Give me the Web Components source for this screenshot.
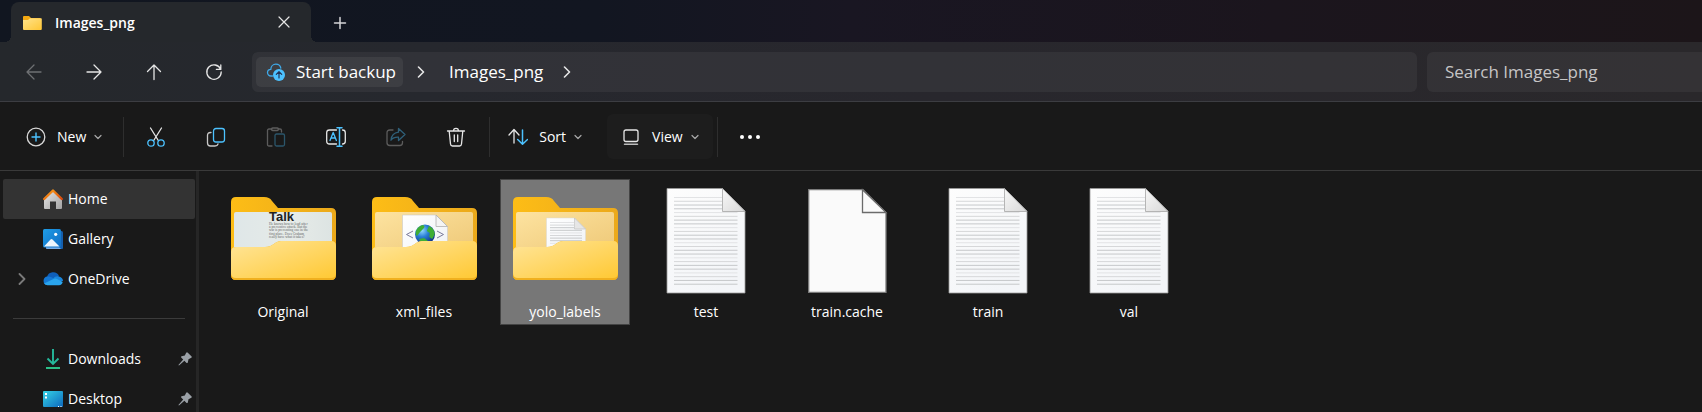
<!DOCTYPE html>
<html lang="en">
<head>
<meta charset="utf-8">
<title>Images_png</title>
<style>
  html, body { margin: 0; height: 100%; background: #191919; }
  body { font-family: "Open Sans", "Noto Sans", sans-serif; font-size: 14px; line-height: 20px; color: #fff; overflow: hidden; }
</style>
</head>
<body>
<file-explorer></file-explorer>
<script>
const line = (box, body, w = 20, h = 20) =>
  `<svg width="${w}" height="${h}" viewBox="${box}" fill="none" stroke="#e6e6e6" stroke-width="1.3" stroke-linecap="round" stroke-linejoin="round">${body}</svg>`;

const folderBack = `
  <defs>
    <linearGradient id="front" x1="0" y1="0" x2="1" y2="1"><stop offset="0" stop-color="#ffe59a"/><stop offset="1" stop-color="#ffc934"/></linearGradient>
    <linearGradient id="back" x1="0" y1="0" x2="1" y2="0"><stop offset="0" stop-color="#fdbd16"/><stop offset="1" stop-color="#eba91b"/></linearGradient>
    <linearGradient id="inner" x1="0" y1="0" x2="1" y2="1"><stop offset="0" stop-color="#fde3a0"/><stop offset="1" stop-color="#eec877"/></linearGradient>
    <linearGradient id="paper" x1="0" y1="0" x2="1" y2="1"><stop offset="0" stop-color="#ffffff"/><stop offset="1" stop-color="#eef1f5"/></linearGradient>
  </defs>
  <path d="M0 14q0-5 5-5h28c4 0 6 1 8 4l6 7h53q5 0 5 5v62q0 5-5 5H5q-5 0-5-5z" fill="url(#back)"/>`;
const folderFront = `
  <path d="M0 64q0-5 5-5h29c4 0 6-1 8-2.500l3-2q2-1.500 5-1.500h50q5 0 5 5v29q0 5-5 5H5q-5 0-5-5z" fill="#f0b01f"/>
  <path d="M0 64q0-5 5-5h29c4 0 6-1 8-2.500l3-2q2-1.500 5-1.500h50q5 0 5 5v27q0 5-5 5H5q-5 0-5-5z" fill="url(#front)"/>`;
const big = (body, x = 0) => `<svg width="106" height="106" viewBox="${x} 0 106 106">${body}</svg>`;
const folder = content => big(folderBack + content + folderFront, -1);

/* Ruled lines of a page; the lines beside the folded corner are shorter. */
const rules = (x, y, w, n, pitch, foldBottom, foldLeft) => Array.from({ length: n }, (_, i) => {
  const ly = y + i * pitch;
  return `<path d="M${x} ${ly}H${ly < foldBottom ? foldLeft : x + w}" stroke="${i % 4 == 0 ? '#e2e3e5' : i % 4 == 1 ? '#d6d7d9' : '#c6c8ca'}" stroke-width="1"/>`;
}).join('');

const textDoc = big(`
  <defs>
    <linearGradient id="page" x1="0" y1="0" x2="0.600" y2="1"><stop offset="0" stop-color="#fdfdfd"/><stop offset="1" stop-color="#f3f5f8"/></linearGradient>
    <linearGradient id="fold" x1="0" y1="0" x2="1" y2="1"><stop offset="0" stop-color="#f8f8f8"/><stop offset="1" stop-color="#d8d8d8"/></linearGradient>
  </defs>
  <path d="M14 .5h55.500l22.500 22.500v82H14z" fill="url(#page)" stroke="#9a9a9a" stroke-width=".8"/>
  ${rules(21, 9.5, 63.5, 24, 3.77, 24, 69)}
  <path d="M69.500 .5v23H92z" fill="url(#fold)" stroke="#a5a5a5" stroke-width=".8"/>`);

const copyLines = ['He knows how to lead after', 'a preventive attack. But the', 'war is preventing one in the', 'first place. Does Graham', 'really have what it takes?'];

const ICONS = {
  tabFolder: `<svg width="20" height="16" viewBox="0 0 20 16"><defs><linearGradient id="g" x1="0" y1="0" x2="1" y2="1"><stop offset="0" stop-color="#ffe38c"/><stop offset="1" stop-color="#ffc634"/></linearGradient></defs><path d="M1 2q0-1 1-1h5l2 2h9.500v10H1z" fill="#f4a912"/><path d="M1 5h5l2-1.700h11q.8 0 .8.8V14q0 1-1 1H2q-1 0-1-1z" fill="url(#g)"/></svg>`,
  close: line('0 0 12 12', '<path d="M1 1l10 10M11 1L1 11" stroke-width="1.200"/>', 12, 12),
  plus: line('0 0 14 14', '<path d="M7 1.500v11M1.500 7h11" stroke="#d5d5d8" stroke-width="1.500"/>', 14, 14),
  back: line('0 0 20 20', '<path d="M17 10H3M10 3l-7 7 7 7" stroke="#6e7073"/>'),
  forward: line('0 0 20 20', '<path d="M3 10h14M10 3l7 7-7 7"/>'),
  up: line('0 0 20 20', '<path d="M10 17.500V3M3.500 9.500L10 3l6.500 6.500"/>'),
  refresh: line('0 0 20 20', '<path d="M16.600 7.200A7.200 7.200 0 1 0 17.200 10M16.800 3v4.400h-4.400"/>'),
  cloud: `<svg width="20" height="20" viewBox="0 0 20 20" fill="none"><path d="M6.500 14H5C3 14 1.500 12.500 1.500 10.600 1.500 8.700 3 7.300 4.800 7.300 5 4.500 7 2.200 9.800 2.200c2.600 0 4.600 1.700 5 4" stroke="#3fa9e8" stroke-width="1.300" stroke-linecap="round"/><circle cx="13" cy="13" r="6" fill="#4cc2ff"/><path d="M13 16v-6M10.300 12.400L13 9.700l2.700 2.700" stroke="#235" stroke-width="1.200" stroke-linecap="round" stroke-linejoin="round"/></svg>`,
  chevron: line('0 0 8 12', '<path d="M1.500 1l5 5-5 5" stroke-width="1.600"/>', 8, 12),
  chevronDim: line('0 0 8 12', '<path d="M1.500 1l5 5-5 5" stroke="#7a7a7a" stroke-width="1.800"/>', 8, 12),
  down: line('0 0 8 8', '<path d="M1 2.500l3 3 3-3" stroke="#a8a8a8" stroke-width="1.200"/>', 8, 8),
  add: line('0 0 20 20', '<circle cx="10" cy="10" r="8.800" stroke="#d8d8d8"/><path d="M10 6v8M6 10h8" stroke="#4cc2ff" stroke-width="1.400"/>'),
  cut: line('0 0 20 20', '<path d="M4.500 1l7.800 12.500M15.500 1L7.700 13.500"/><g stroke="#4cc2ff"><circle cx="5" cy="16" r="3.200"/><circle cx="15" cy="16" r="3.200"/></g>'),
  copy: line('0 0 20 20', '<path d="M5 5.500H4.500Q1.500 5.500 1.500 8.500v7.500q0 3 3 3H9q2.500 0 3-2" stroke="#c8c8c8"/><rect x="7.500" y="1.500" width="11" height="13.500" rx="2.500" stroke="#4cc2ff"/>'),
  paste: line('0 0 20 20', '<g stroke="#5c5c5c"><path d="M6 19H3q-1.500 0-1.500-1.500v-14Q1.500 2 3 2h3M12 2h2q1.500 0 1.500 1.500V5"/><rect x="5.500" y="1" width="7" height="2.500" rx="1.200"/></g><rect x="9" y="7" width="9.500" height="12" rx="1.500" stroke="#2b566b"/>'),
  rename: line('0 0 20 20', '<path d="M10.500 17H3.500Q.7 17 .7 14.200V5.800Q.7 3 3.500 3h7M16.500 3q2.800 0 2.800 2.800v8.400q0 2.800-2.800 2.800"/><g stroke="#4cc2ff"><path d="M4 13.500l3.200-8 3.200 8M5 11h4.400"/><path d="M13.500 1v18M11 .8h5M11 19.200h5" stroke-width="1.500"/></g>'),
  share: line('0 0 20 20', '<path d="M7 3H3.800Q1 3 1 5.800v10Q1 18.500 3.800 18.500h10q2.700 0 2.700-2.700V14.500" stroke="#5c5c5c"/><path d="M12.500 1.500L19 7.500l-6.500 6v-3.300q-5-.3-7.500 3 .5-7 7.500-8z" stroke="#2f607a"/>'),
  trash: line('0 0 20 20', '<path d="M1.500 4h17M7.500 4q0-2.700 2.500-2.700T12.500 4M3.200 4l1.300 13q.2 2 2 2h7q1.800 0 2-2l1.300-13M8.300 8v6.500M11.700 8v6.500"/>'),
  sort: line('0 0 20 20', '<path d="M6 16V3M1 8l5-5.500L11 8"/><path d="M14.500 3v14M9.700 12.500l4.800 4.800 5-4.800" stroke="#4cc2ff" stroke-width="1.500"/>'),
  view: line('0 0 20 20', '<rect x="3" y="3" width="14" height="11.500" rx="2"/><path d="M3.500 17.300h13" stroke-width="1.500" stroke="#bdbdbd"/>'),
  more: `<svg width="20" height="20" viewBox="0 0 20 20" fill="#fff"><circle cx="2" cy="10" r="2"/><circle cx="10" cy="10" r="2"/><circle cx="18" cy="10" r="2"/></svg>`,
  home: `<svg width="20" height="20" viewBox="0 0 20 20"><defs><linearGradient id="w" x1="0" y1="0" x2="1" y2="1"><stop offset="0" stop-color="#e8e8e8"/><stop offset="1" stop-color="#a3a3a3"/></linearGradient><linearGradient id="r" x1="0" y1="0" x2="1" y2="1"><stop offset="0" stop-color="#ffa51c"/><stop offset="1" stop-color="#d8480c"/></linearGradient></defs><path d="M1 9.500L10 1l9 8.500V19q0 1-1 1h-5v-7.500H7V20H2q-1 0-1-1z" fill="url(#w)"/><path d="M1.200 10L10 1.500l8.800 8.500" fill="none" stroke="url(#r)" stroke-width="2.400" stroke-linecap="round" stroke-linejoin="round"/></svg>`,
  gallery: `<svg width="20" height="20" viewBox="0 0 20 20"><defs><linearGradient id="b" x1="0" y1="0" x2="1" y2="1"><stop offset="0" stop-color="#1f9de6"/><stop offset="1" stop-color="#0f6cc4"/></linearGradient></defs><path d="M3 2h15.500q1.500 0 1.500 1.500V19q0 1-1 1H4q-1 0-1-1z" fill="#155fae"/><path d="M3 18h13l2 2H4q-1 0-1-1z" fill="#7aaee6"/><rect width="18" height="18.500" rx="1.500" fill="url(#b)"/><path d="M1 17.500l6.500-7q1-1 2 0l7 7z" fill="#eef6fd"/><circle cx="12.700" cy="5.300" r="1.600" fill="#fff"/></svg>`,
  onedrive: `<svg width="20" height="20" viewBox="0 0 20 20"><path d="M4 8a6.400 6.400 0 0 1 12-1l-5 5.500z" fill="#0f5fba"/><path d="M4.500 7.500q3-.5 5.500 1.500l4 2.500-9.500 4.500H4A4.300 4.300 0 0 1 4.500 7.500z" fill="#1478d4"/><path d="M10 9.500q2.500-3 6-2 4 1 4 4.500l-5 1z" fill="#1a86dc"/><path d="M1 14.500L10.500 10q2-1 4 .2L19.700 13q-.5 3-3.700 3.200H4.500q-2 0-3.500-1.700z" fill="#2aa5ee"/></svg>`,
  downloads: `<svg width="20" height="20" viewBox="0 0 20 20" fill="none" stroke-width="1.900"><path d="M10 0v14.500M4.500 9.500L10 15l5.500-5.500" stroke="#25b99c"/><path d="M3 19h14" stroke="#2ec98f"/></svg>`,
  desktop: `<svg width="20" height="20" viewBox="0 0 20 20"><defs><linearGradient id="d" x1="0" y1="0" x2="1" y2="1"><stop offset="0" stop-color="#35d3e6"/><stop offset="1" stop-color="#0d68bd"/></linearGradient></defs><rect y="2" width="20" height="16" rx="1" fill="url(#d)"/><path d="M2 4h2v2H2zM2 7.500h2v2H2zM15 17h1v1h-1zM17.500 17h1v1h-1z" fill="#fff"/></svg>`,
  pin: `<svg width="14" height="14" viewBox="0 0 14 14"><path d="M8.200.7q.8-.8 1.600 0L13.400 4.200q.7.8-.1 1.500L10.500 7.200 9.800 10.500q-.6 1-1.500.2L6.400 8.800 1 13.500.4 13 5.200 7.600 3.400 5.700q-.8-.9.200-1.400L6.800 3.600z" fill="#9aa0a6"/></svg>`,
  doc: textDoc,
  blank: big(`<path d="M14.700 1.700h54.300l23 23v79.600H14.700z" fill="#fafafa" stroke="#7b7b7b" stroke-width="1.300"/><path d="M68.500 1.700v22.800H92z" fill="#fafafa" stroke="#6b6b6b" stroke-width="1.300"/>`),
  folderPicture: folder(`
    <defs><linearGradient id="photo" x1="0" y1="0" x2="1" y2="0"><stop offset="0" stop-color="#dfe7e8"/><stop offset=".6" stop-color="#e6ebe8"/><stop offset="1" stop-color="#dde4e3"/></linearGradient></defs>
    <rect x="3" y="24" width="98" height="40" rx="2" fill="url(#photo)"/>
    <g font-family="Liberation Sans, sans-serif"><text x="38" y="33" font-size="13" font-weight="700" fill="#222">Talk</text>
    <g font-family="Liberation Serif, serif" font-size="3.500" fill="#5f6464">${copyLines.map((t, i) => `<text x="38" y="${37 + i * 3.2}">${t}</text>`).join('')}</g></g>`),
  folderXml: folder(`
    <defs><radialGradient id="sea" cx=".35" cy=".3" r=".8"><stop offset="0" stop-color="#8fd8ff"/><stop offset=".4" stop-color="#2a7fd6"/><stop offset="1" stop-color="#0a2474"/></radialGradient></defs>
    <rect x="3" y="24" width="98" height="40" rx="2" fill="url(#inner)"/>
    <path d="M30.500 27h33.500l11.500 11.500V70H30.500z" fill="url(#paper)" stroke="#c9c9c9" stroke-width=".6"/>
    <path d="M64 27v11.500h11.500z" fill="#f4f4f4" stroke="#b0b0b0" stroke-width=".8"/>
    <circle cx="53" cy="46.500" r="10" fill="url(#sea)"/>
    <path d="M44 43q2-5 7-6 3 1 0 4l-3 3-3 4q-2-1-1-5zM57 38q5 2 5.800 8l-2.500 5-3-2 .5-4-3-2zM47 51l5-1 4 3-2 3h-4z" fill="#3fae35"/>
    <path d="M41 43l-6.500 3.500L41 50M65 43l6.500 3.500L65 50" fill="none" stroke="#7a7a9a" stroke-width="1"/>`),
  folderText: folder(`
    <rect x="3" y="24" width="98" height="40" rx="2" fill="url(#inner)"/>
    <path d="M33.500 30h28l11 11v25h-39z" fill="url(#paper)" stroke="#d8d8d8" stroke-width=".5"/>
    ${rules(37, 34.5, 32, 9, 2.6, 41, 61)}
    <path d="M61.500 30v11h11z" fill="#e6e6e6" stroke="#bdbdbd" stroke-width=".6"/>`),
};

function define(name, css, html) {
  customElements.define(name, class extends HTMLElement {
    connectedCallback() {
      if (this.shadowRoot) return;
      const root = this.attachShadow({ mode: 'open' });
      const t = document.createElement('template');
      t.innerHTML = `<style>*{box-sizing:border-box}${css}</style>` + (typeof html === 'function' ? html(this) : html);
      root.append(t.content.cloneNode(true));
    }
  });
}
const attr = (el, name) => el.getAttribute(name) || '';
const buttonReset = 'button{font:inherit;color:inherit;background:none;border:0;padding:0;margin:0;cursor:default}';

define('x-icon', ':host{display:inline-flex;flex:none}svg{display:block}', el => ICONS[attr(el, 'name')]);

define('title-bar', `${buttonReset}
  :host{display:flex;height:42px;padding:2px 11px 0;background:linear-gradient(90deg,#111620,#121621 35%,#191622 50%,#1b151d 75%,#1c1519);}
  .tab{position:relative;display:flex;align-items:center;width:300px;height:40px;padding:2px 21px 0 11px;gap:13px;background:#25282c;border-radius:8px 8px 0 0;font-weight:600}
  .tab::before,.tab::after{content:"";position:absolute;bottom:0;width:6px;height:6px}
  .tab::before{left:-6px;background:radial-gradient(circle at 0 0,transparent 6px,#25282c 6px)}
  .tab::after{right:-6px;background:radial-gradient(circle at 100% 0,transparent 6px,#25282c 6px)}
  .tab span{flex:1}
  .new{width:58px;padding-top:2px;display:flex;justify-content:center;align-items:center}`,
  `<div class="tab"><x-icon name="tabFolder"></x-icon><span>Images_png</span><button aria-label="Close tab"><x-icon name="close"></x-icon></button></div>
   <button class="new" aria-label="New tab"><x-icon name="plus"></x-icon></button>`);

define('address-bar', `${buttonReset}
  :host{display:flex;flex:1;min-width:0;height:40px;align-items:center;padding:0 4px;background:rgba(255,255,255,.05);border-radius:6px;font-size:17px;line-height:24px}
  button{display:flex;align-items:center;height:30px;border-radius:5px;white-space:nowrap}
  .chip{background:rgba(255,255,255,.06);padding:0 7px 0 10px;gap:10px}
  .crumb{padding:0 6px}
  x-icon.sep{margin:0 18px 0 14px}`,
  `<button class="chip"><x-icon name="cloud"></x-icon>Start backup</button><x-icon class="sep" name="chevron"></x-icon>
   <button class="crumb">Images_png</button><x-icon class="sep" name="chevron"></x-icon>`);

define('nav-bar', `${buttonReset}
  :host{display:flex;height:60px;align-items:center;padding-left:4px;border-bottom:1px solid #3c3d42;background:linear-gradient(90deg,#25282c,#26282e 25%,#28272d 55%,#2a282b)}
  nav{display:flex;width:248px}
  nav button{width:60px;height:40px;display:flex;align-items:center;justify-content:center}
  input{width:275px;height:40px;margin:0 0 0 10px;padding:0 18px;border:0;outline:0;border-radius:6px 0 0 6px;background:rgba(255,255,255,.05);font:inherit;font-size:17px;color:#fff}
  input::placeholder{color:#c6c5c6;opacity:1}`,
  `<nav aria-label="History"><button aria-label="Back"><x-icon name="back"></x-icon></button><button aria-label="Forward"><x-icon name="forward"></x-icon></button><button aria-label="Up"><x-icon name="up"></x-icon></button><button aria-label="Refresh"><x-icon name="refresh"></x-icon></button></nav>
   <address-bar></address-bar><input type="search" aria-label="Search Images_png" placeholder="Search Images_png">`);

define('menu-button', `${buttonReset}
  :host{display:block}
  button{display:flex;align-items:center;height:45px;padding:0 14px;border-radius:6px}
  .label{margin:0 8px 0 11px}
  :host([active]) button{background:#1d1d1d}`,
  el => `<button aria-haspopup="menu"><x-icon name="${attr(el, 'icon')}"></x-icon><span class="label"><slot></slot></span><x-icon name="down"></x-icon></button>`);

define('tool-button', `${buttonReset}
  :host{display:block}
  button{width:60px;height:45px;display:flex;align-items:center;justify-content:center}`,
  el => `<button aria-label="${attr(el, 'label')}" ${el.hasAttribute('off') ? 'disabled' : ''}><x-icon name="${attr(el, 'icon')}"></x-icon></button>`);

define('command-bar', `*{flex:none}
  :host{box-sizing:border-box;display:flex;align-items:center;height:69px;padding:1px 0 0 12px;background:#191919;border-bottom:1px solid #3a3a3a}
  i{width:1px;height:40px;background:#2e2e2e}
  .a{margin:0 2px 0 7px}.b{margin:0 4px 0 3px}.c{margin:0 2px 0 4px}
  .v{margin-left:11px}`,
  `<menu-button icon="add">New</menu-button><i class="a"></i>
   <tool-button icon="cut" label="Cut"></tool-button><tool-button icon="copy" label="Copy"></tool-button><tool-button icon="paste" label="Paste" off></tool-button><tool-button icon="rename" label="Rename"></tool-button><tool-button icon="share" label="Share" off></tool-button><tool-button icon="trash" label="Delete"></tool-button>
   <i class="b"></i><menu-button icon="sort">Sort</menu-button><menu-button class="v" icon="view" active>View</menu-button><i class="c"></i><tool-button icon="more" label="See more"></tool-button>`);

define('side-item', `
  :host{display:block}
  a{display:flex;align-items:center;height:40px;padding:0 3px 0 15px;border-radius:2px;color:inherit;text-decoration:none}
  .lead{width:25px;display:flex}
  .text{flex:1;margin-left:5px}
  :host([current]) a{background:#333}`,
  el => `<a href="#"><span class="lead">${el.hasAttribute('expand') ? '<x-icon name="chevronDim"></x-icon>' : ''}</span><x-icon name="${attr(el, 'icon')}"></x-icon><span class="text"><slot></slot></span>${el.hasAttribute('pinned') ? '<x-icon name="pin"></x-icon>' : ''}</a>`);

define('side-bar', `
  :host{box-sizing:border-box;display:block;flex:none;width:199px;padding:8px 1px 0 3px;border-right:3px solid #262626;overflow:hidden}
  hr{height:1px;border:0;margin:19px 10px 20px;background:#3b3b3b}`,
  `<side-item icon="home" current>Home</side-item><side-item icon="gallery">Gallery</side-item><side-item icon="onedrive" expand>OneDrive</side-item><hr>
   <side-item icon="downloads" pinned>Downloads</side-item><side-item icon="desktop" pinned>Desktop</side-item>`);

define('file-tile', `${buttonReset}
  :host{display:block}
  button{display:flex;flex-direction:column;align-items:center;width:130px;height:146px;padding:8px 0 0;border:1px solid transparent;gap:8px}
  :host([selected]) button{background:#777;border-color:#444}`,
  el => `<button><x-icon name="${attr(el, 'icon')}"></x-icon><span><slot></slot></span></button>`);

define('file-grid', `:host{display:flex;flex-wrap:wrap;align-content:flex-start;flex:1;gap:11px;padding:8px 0 0 19px}`,
  `<file-tile icon="folderPicture">Original</file-tile><file-tile icon="folderXml">xml_files</file-tile><file-tile icon="folderText" selected>yolo_labels</file-tile><file-tile icon="doc">test</file-tile><file-tile icon="blank">train.cache</file-tile><file-tile icon="doc">train</file-tile><file-tile icon="doc">val</file-tile>`);

define('file-explorer', `
  :host{display:flex;flex-direction:column;height:100vh}
  title-bar,nav-bar,command-bar{box-sizing:border-box;flex:none}
  main{display:flex;flex:1;min-height:0;overflow:hidden}`,
  `<title-bar></title-bar><nav-bar></nav-bar><command-bar></command-bar><main><side-bar></side-bar><file-grid></file-grid></main>`);
</script>
</body>
</html>
